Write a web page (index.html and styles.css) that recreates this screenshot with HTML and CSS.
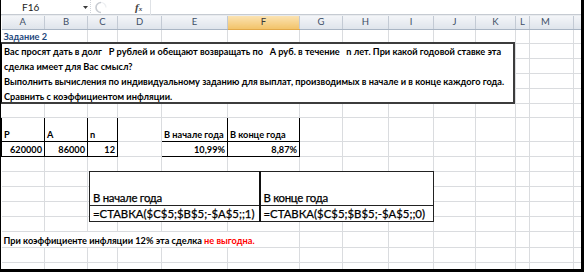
FILE: index.html
```html
<!DOCTYPE html>
<html lang="ru">
<head>
<meta charset="utf-8">
<title>Задание 2</title>
<link rel="stylesheet" href="styles.css">
</head>
<body>
<div class="screen">
  <div class="fbar">
    <div class="namebox">F16</div>
    <div class="nb-drop"><svg width="5" height="3" viewBox="0 0 5 3"><path d="M0 0H5L2.5 3Z" fill="#3a3a3a"/></svg></div>
    <div class="fbtns">
      <svg class="ghost" width="14" height="13" viewBox="0 0 14 13"><path d="M7 1.5A5 5 0 0 0 7 11.5" fill="none" stroke="#c8ccd2" stroke-width="1.6"/><path d="M7 1.5A5 5 0 0 1 12 6.5" fill="none" stroke="#eceef1" stroke-width="1.2"/></svg>
      <span class="fx">f<span class="fxs">x</span></span>
    </div>
    <div class="finput"></div>
  </div>
  <div class="sheet">
    <table class="grid">
      <colgroup>
        <col class="w43"><col class="w43"><col class="w30"><col class="w44"><col class="w66"><col class="w72"><col class="w43"><col class="w46"><col class="w45"><col class="w42"><col class="w40"><col class="w14"><col class="w44"><col class="w10">
      </colgroup>
      <tr class="hdr"><th>A</th><th>B</th><th>C</th><th>D</th><th>E</th><th class="sel">F</th><th>G</th><th>H</th><th>I</th><th>J</th><th>K</th><th>L</th><th class="mh">M</th><th></th></tr>
      <tr class="r14"><td colspan="2" class="title">Задание 2</td><td></td><td></td><td></td><td></td><td></td><td></td><td></td><td></td><td></td><td></td><td></td><td></td></tr>
      <tr class="r15"><td></td><td></td><td></td><td></td><td></td><td></td><td></td><td></td><td></td><td></td><td></td><td></td><td></td><td></td></tr>
      <tr class="r15"><td></td><td></td><td></td><td></td><td></td><td></td><td></td><td></td><td></td><td></td><td></td><td></td><td></td><td></td></tr>
      <tr class="r15"><td></td><td></td><td></td><td></td><td></td><td></td><td></td><td></td><td></td><td></td><td></td><td></td><td></td><td></td></tr>
      <tr class="r15"><td></td><td></td><td></td><td></td><td></td><td></td><td></td><td></td><td></td><td></td><td></td><td></td><td></td><td></td></tr>
      <tr class="r14"><td></td><td></td><td></td><td></td><td></td><td></td><td></td><td></td><td></td><td></td><td></td><td></td><td></td><td></td></tr>
      <tr class="r24"><td class="bx">P</td><td class="bx">A</td><td class="bx">n</td><td></td><td class="bx">В начале года</td><td class="bx">В конце года</td><td></td><td></td><td></td><td></td><td></td><td></td><td></td><td></td></tr>
      <tr class="r15"><td class="bx num">620000</td><td class="bx num">86000</td><td class="bx num">12</td><td></td><td class="bx num">10,99%</td><td class="bx num">8,87%</td><td></td><td></td><td></td><td></td><td></td><td></td><td></td><td></td></tr>
      <tr class="r15"><td></td><td></td><td></td><td></td><td></td><td></td><td></td><td></td><td></td><td></td><td></td><td></td><td></td><td></td></tr>
      <tr class="r15"><td></td><td></td><td></td><td></td><td></td><td></td><td></td><td></td><td></td><td></td><td></td><td></td><td></td><td></td></tr>
      <tr class="r15"><td></td><td></td><td></td><td></td><td></td><td></td><td></td><td></td><td></td><td></td><td></td><td></td><td></td><td></td></tr>
      <tr class="r15"><td></td><td></td><td></td><td></td><td></td><td></td><td></td><td></td><td></td><td></td><td></td><td></td><td></td><td></td></tr>
      <tr class="r15"><td></td><td></td><td></td><td></td><td></td><td></td><td></td><td></td><td></td><td></td><td></td><td></td><td></td><td></td></tr>
      <tr class="r16"><td colspan="6" class="concl">При коэффициенте инфляции 12% эта сделка <span class="red">не выгодна.</span></td><td></td><td></td><td></td><td></td><td></td><td></td><td></td><td></td></tr>
      <tr class="r15"><td></td><td></td><td></td><td></td><td></td><td></td><td></td><td></td><td></td><td></td><td></td><td></td><td></td><td></td></tr>
      <tr class="r15"><td></td><td></td><td></td><td></td><td></td><td></td><td></td><td></td><td></td><td></td><td></td><td></td><td></td><td></td></tr>
    </table>

    <div class="taskbox">
      <p>Вас просят дать в долг &nbsp; Р рублей и обещают возвращать по &nbsp; А руб. в течение &nbsp; n лет. При какой годовой ставке эта</p>
      <p>сделка имеет для Вас смысл?</p>
      <p>Выполнить вычисления по индивидуальному заданию для выплат, производимых в начале и в конце каждого года.</p>
      <p>Сравнить с коэффициентом инфляции.</p>
    </div>

    <table class="formulas">
      <tr class="fh"><td><span class="tight">В начале года</span></td><td class="mid"><span class="tight">В конце года</span></td></tr>
      <tr class="fr"><td>=СТАВКА($C$5;$B$5;-$A$5;;1)</td><td class="mid">=СТАВКА($C$5;$B$5;-$A$5;;0)</td></tr>
    </table>
  </div>
</div>
</body>
</html>
```

FILE: styles.css
```css
* { box-sizing: border-box; }
html, body { margin: 0; padding: 0; background: #fff; }
body { font-family: "Lato", "Liberation Sans", sans-serif; color: #000; }

.screen {
  position: relative;
  width: 584px;
  height: 272px;
  overflow: hidden;
  background: #fff;
  border-left: 1px solid #000;
  border-right: 3px solid #000;
  border-bottom: 3px solid #000;
}

/* formula bar */
.fbar {
  display: flex;
  align-items: center;
  height: 15px;
  border-bottom: 1px solid #c6cbd2;
  background: #fff;
}
.namebox {
  flex: none;
  width: 79px;
  height: 15px;
  padding-left: 21px;
  font-size: 10px;
  line-height: 15px;
  color: #222;
}
.nb-drop { flex: none; width: 10px; display: flex; align-items: center; justify-content: center; }
.fbtns {
  flex: none;
  width: 60px;
  height: 15px;
  display: flex;
  align-items: center;
  padding-left: 3px;
  border-left: 1px dotted #d0d4da;
}
.fx {
  margin-left: 27px;
  font-family: "Liberation Serif", serif;
  font-style: italic;
  font-weight: bold;
  font-size: 11px;
  color: #444;
}
.fxs { font-size: 7px; }
.finput { flex: 1; height: 15px; border-left: 1px solid #dfe2e6; }

/* sheet grid */
.sheet { position: relative; border-top: 1px solid #e8ebef; }
.grid { border-collapse: collapse; table-layout: fixed; width: 580px; }
.w43 { width: 43px; } .w30 { width: 30px; } .w44 { width: 44px; } .w66 { width: 66px; }
.w72 { width: 72px; } .w42 { width: 42px; } .w45 { width: 45px; } .w46 { width: 46px; }
.w40 { width: 40px; } .w14 { width: 14px; } .w10 { width: 10px; }

.grid th {
  height: 13px;
  padding: 0;
  font-weight: normal;
  font-size: 9.5px;
  line-height: 12px;
  color: #3e4f66;
  background: linear-gradient(#f3f5f8, #dfe4eb);
  border-right: 1px solid #c3cad4;
  border-bottom: 1px solid #a9b5c4;
}
.grid th.sel { background: linear-gradient(#fbe3b2, #f2c36a); color: #3a3a3a; border-bottom-color: #e2a94a; }
.grid th.mh { text-align: left; padding-left: 11px; }

.grid td {
  padding: 0 2px 1px;
  border-right: 1px solid #dadcdf;
  border-bottom: 1px solid #dadcdf;
  font-size: 9.2px;
  font-weight: bold;
  line-height: 11px;
  white-space: nowrap;
  overflow: hidden;
  vertical-align: bottom;
}
.r14 td { height: 14px; }
.r15 td { height: 15px; }
.r16 td { height: 16px; }
.r24 td { height: 24px; }

.grid td.title { color: #1f497d; }
.grid td.bx { border: 1px solid #000; }
.grid td.num { text-align: right; }
.grid td.concl { overflow: visible; }
.red { color: #ff0000; }

/* task text box (drawing object over the grid) */
.taskbox {
  position: absolute;
  left: -1px;
  top: 26px;
  width: 515px;
  height: 62px;
  padding: 1px 0 0 2px;
  background: #fff;
  border: 2px solid #3c3c3c;
  border-left-color: #000;
}
.taskbox p {
  margin: 0;
  height: 15px;
  font-size: 9.2px;
  font-weight: bold;
  line-height: 14px;
  white-space: nowrap;
}

/* pasted formula table (object over the grid) */
.formulas {
  position: absolute;
  left: 88px;
  top: 155px;
  width: 344px;
  border-collapse: collapse;
  background: #fff;
  table-layout: fixed;
}
.formulas td {
  width: 170px;
  padding: 0 3px 1px;
  border: 1px solid #222;
  font-size: 11.4px;
  line-height: 13px;
  vertical-align: bottom;
  white-space: nowrap;
  -webkit-text-stroke: 0.25px #000;
}
.formulas .tight { letter-spacing: -0.3px; }
.formulas td.mid { width: 174px; border-left: 2px solid #111; }
.fh td { height: 34px; }
.fr td { height: 16px; }
```
